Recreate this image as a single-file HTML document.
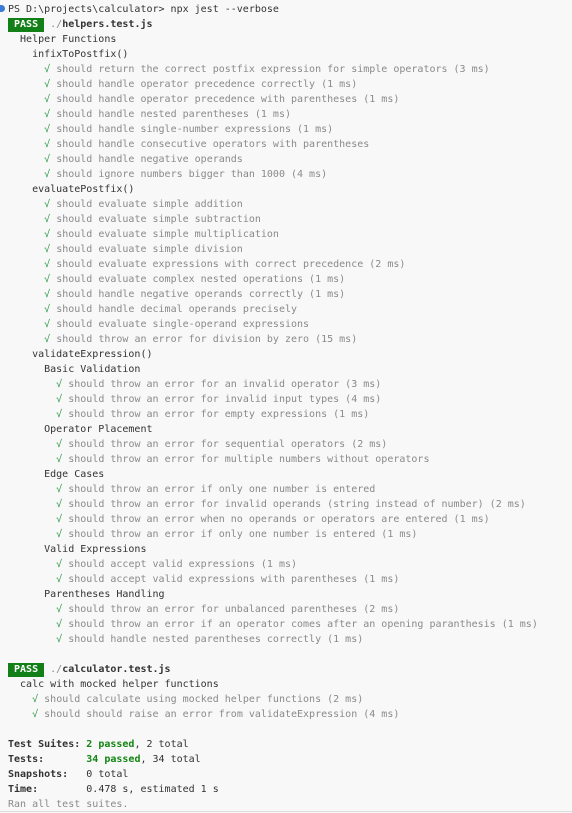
<!DOCTYPE html>
<html><head><meta charset="utf-8"><style>
html,body{margin:0;padding:0;background:#f8f8f8;width:572px;height:813px;overflow:hidden}
pre{margin:0;padding:2px 0 0 8px;font-family:"DejaVu Sans Mono","Liberation Mono",monospace;font-size:10px;line-height:15px;color:#333}
.g{color:#8a8a8a}.c{color:#2f9a4a}.b{font-weight:bold}.gr{color:#128512}
.pass{background:#137f17;color:#fff;font-weight:bold;display:inline-block;line-height:14px;padding:0 0;}
.dot{position:absolute;left:0;top:5px;width:5px;height:7px;border-radius:0 4px 4px 0;background:#3a7bd5}
.bl{position:absolute;left:0;right:0;bottom:1px;height:1px;background:#ddd}
</style></head><body><div class="dot"></div><pre>PS D:\projects\calculator&gt; npx jest --verbose
<span class="pass"> PASS </span> <span class="g">./</span><span class="b">helpers.test.js</span>
  Helper Functions
    infixToPostfix()
      <span class="c">√</span> <span class="g">should return the correct postfix expression for simple operators (3 ms)</span>
      <span class="c">√</span> <span class="g">should handle operator precedence correctly (1 ms)</span>
      <span class="c">√</span> <span class="g">should handle operator precedence with parentheses (1 ms)</span>
      <span class="c">√</span> <span class="g">should handle nested parentheses (1 ms)</span>
      <span class="c">√</span> <span class="g">should handle single-number expressions (1 ms)</span>
      <span class="c">√</span> <span class="g">should handle consecutive operators with parentheses</span>
      <span class="c">√</span> <span class="g">should handle negative operands</span>
      <span class="c">√</span> <span class="g">should ignore numbers bigger than 1000 (4 ms)</span>
    evaluatePostfix()
      <span class="c">√</span> <span class="g">should evaluate simple addition</span>
      <span class="c">√</span> <span class="g">should evaluate simple subtraction</span>
      <span class="c">√</span> <span class="g">should evaluate simple multiplication</span>
      <span class="c">√</span> <span class="g">should evaluate simple division</span>
      <span class="c">√</span> <span class="g">should evaluate expressions with correct precedence (2 ms)</span>
      <span class="c">√</span> <span class="g">should evaluate complex nested operations (1 ms)</span>
      <span class="c">√</span> <span class="g">should handle negative operands correctly (1 ms)</span>
      <span class="c">√</span> <span class="g">should handle decimal operands precisely</span>
      <span class="c">√</span> <span class="g">should evaluate single-operand expressions</span>
      <span class="c">√</span> <span class="g">should throw an error for division by zero (15 ms)</span>
    validateExpression()
      Basic Validation
        <span class="c">√</span> <span class="g">should throw an error for an invalid operator (3 ms)</span>
        <span class="c">√</span> <span class="g">should throw an error for invalid input types (4 ms)</span>
        <span class="c">√</span> <span class="g">should throw an error for empty expressions (1 ms)</span>
      Operator Placement
        <span class="c">√</span> <span class="g">should throw an error for sequential operators (2 ms)</span>
        <span class="c">√</span> <span class="g">should throw an error for multiple numbers without operators</span>
      Edge Cases
        <span class="c">√</span> <span class="g">should throw an error if only one number is entered</span>
        <span class="c">√</span> <span class="g">should throw an error for invalid operands (string instead of number) (2 ms)</span>
        <span class="c">√</span> <span class="g">should throw an error when no operands or operators are entered (1 ms)</span>
        <span class="c">√</span> <span class="g">should throw an error if only one number is entered (1 ms)</span>
      Valid Expressions
        <span class="c">√</span> <span class="g">should accept valid expressions (1 ms)</span>
        <span class="c">√</span> <span class="g">should accept valid expressions with parentheses (1 ms)</span>
      Parentheses Handling
        <span class="c">√</span> <span class="g">should throw an error for unbalanced parentheses (2 ms)</span>
        <span class="c">√</span> <span class="g">should throw an error if an operator comes after an opening paranthesis (1 ms)</span>
        <span class="c">√</span> <span class="g">should handle nested parentheses correctly (1 ms)</span>

<span class="pass"> PASS </span> <span class="g">./</span><span class="b">calculator.test.js</span>
  calc with mocked helper functions
    <span class="c">√</span> <span class="g">should calculate using mocked helper functions (2 ms)</span>
    <span class="c">√</span> <span class="g">should should raise an error from validateExpression (4 ms)</span>

<span class="b">Test Suites: </span><span class="b gr">2 passed</span>, 2 total
<span class="b">Tests:       </span><span class="b gr">34 passed</span>, 34 total
<span class="b">Snapshots:   </span>0 total
<span class="b">Time:        </span>0.478 s, estimated 1 s
<span class="g">Ran all test suites.</span></pre><div class="bl"></div></body></html>
